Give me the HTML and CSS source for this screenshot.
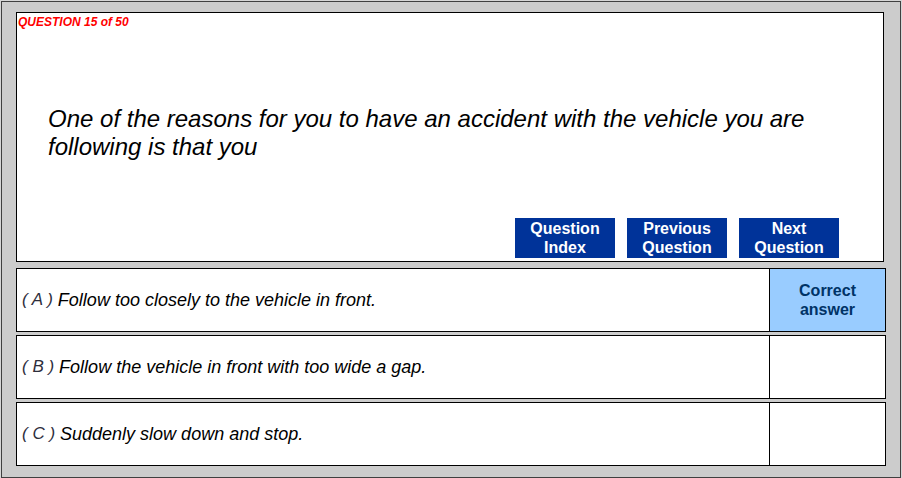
FILE: index.html
```html
<!DOCTYPE html>
<html lang="en">
<head>
  <meta charset="UTF-8" />
  <meta name="viewport" content="width=device-width, initial-scale=1" />
  <title>Question 15 of 50</title>
  <link rel="stylesheet" href="styles.css">
</head>
<body>

  <div class="frame">

    <div class="question-box">
      <div class="q-count">QUESTION 15 of 50</div>
      <p class="q-text">One of the reasons for you to have an accident with the vehicle you are following is that you</p>
      <div class="nav">
        <button class="nav-btn">Question<br>Index</button>
        <button class="nav-btn">Previous<br>Question</button>
        <button class="nav-btn">Next<br>Question</button>
      </div>
    </div>

    <div class="answers">
      <div class="answer">
        <div class="answer-text"><span class="letter">( A )</span> Follow too closely to the vehicle in front.</div>
        <div class="answer-mark correct">Correct<br>answer</div>
      </div>
      <div class="answer">
        <div class="answer-text"><span class="letter">( B )</span> Follow the vehicle in front with too wide a gap.</div>
        <div class="answer-mark"></div>
      </div>
      <div class="answer">
        <div class="answer-text"><span class="letter">( C )</span> Suddenly slow down and stop.</div>
        <div class="answer-mark"></div>
      </div>
    </div>

  </div>

</body>
</html>
```

FILE: styles.css
```css
:root {
  --frame-bg: #cccccc;
  --frame-line: #404040;
  --btn-bg: #003399;
  --correct-bg: #99ccff;
  --correct-text: #003366;
  --red: #ff0000;
}

body {
  margin: 0;
  padding: 1px 0 0 1px;
  background-color: #d6d6d6;
  font-family: 'Liberation Sans', Arial, sans-serif;
  color: #000;
}

.frame {
  box-sizing: border-box;
  width: 900px;
  height: 477px;
  padding: 10px 0 0 14px;
  background-color: var(--frame-bg);
  border: 1px solid var(--frame-line);
}

.question-box {
  box-sizing: border-box;
  width: 868px;
  height: 250px;
  background: white;
  border: 1px solid #000;
  display: flex;
  flex-direction: column;
}

.q-count {
  margin: 2px 0 0 1px;
  font-size: 12px;
  line-height: 14px;
  font-weight: bold;
  font-style: italic;
  color: var(--red);
}

.q-text {
  margin: 76px 0 0 31px;
  font-size: 24px;
  line-height: 28px;
  font-style: italic;
}

.nav {
  margin-top: auto;
  margin-bottom: 3px;
  padding-right: 44px;
  display: flex;
  justify-content: flex-end;
  gap: 12px;
}

.nav-btn {
  width: 100px;
  height: 40px;
  padding: 0;
  border: none;
  background-color: var(--btn-bg);
  color: white;
  font-family: inherit;
  font-size: 16px;
  line-height: 19px;
  font-weight: bold;
  cursor: pointer;
}

.answers {
  margin-top: 6px;
  display: flex;
  flex-direction: column;
  gap: 3px;
}

.answer {
  box-sizing: border-box;
  width: 870px;
  height: 64px;
  background: white;
  border: 1px solid #000;
  display: flex;
}

.answer-text {
  flex: 1;
  display: flex;
  align-items: center;
  padding-left: 5px;
  font-size: 18px;
  font-style: italic;
  white-space: pre;
}

.letter {
  font-size: 17px;
  color: #2e2e3c;
}

.answer-mark {
  width: 115px;
  border-left: 1px solid #000;
  display: flex;
  align-items: center;
  justify-content: center;
  text-align: center;
  font-size: 16px;
  line-height: 19px;
  font-weight: bold;
}

.answer-mark.correct {
  background-color: var(--correct-bg);
  color: var(--correct-text);
}
```
